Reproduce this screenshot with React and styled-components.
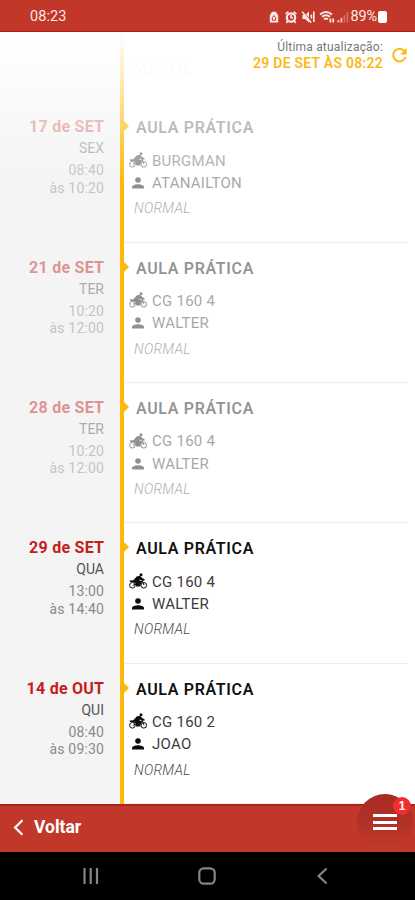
import React from 'react'
import styled, { createGlobalStyle } from 'styled-components'

const lessons = [
    { date: "17 de SET", day: "SEX", start: "08:40", end: "às 10:20", vehicle: "BURGMAN", teacher: "ATANAILTON", past: true },
    { date: "21 de SET", day: "TER", start: "10:20", end: "às 12:00", vehicle: "CG 160 4", teacher: "WALTER", past: true },
    { date: "28 de SET", day: "TER", start: "10:20", end: "às 12:00", vehicle: "CG 160 4", teacher: "WALTER", past: true },
    { date: "29 de SET", day: "QUA", start: "13:00", end: "às 14:40", vehicle: "CG 160 4", teacher: "WALTER", past: false },
    { date: "14 de OUT", day: "QUI", start: "08:40", end: "às 09:30", vehicle: "CG 160 2", teacher: "JOAO", past: false },
]

function MotorbikeIcon() {
    return (
        <svg width="19" height="17" viewBox="0 0 19 17" fill="none" stroke="currentColor">
            <circle cx="3.4" cy="12.3" r="2.8" strokeWidth="1" />
            <circle cx="14.8" cy="12.3" r="2.8" strokeWidth="1" />
            <circle cx="12" cy="1.8" r="1.5" fill="currentColor" stroke="none" />
            <path d="M.6 7.6 4.4 7.2 7.6 3.4 11 2.8 13.2 5 15.6 6.2 15.4 7.8 12.6 7.6 10.8 6.4 10.2 7.2 13.4 8.6 11.8 11 11.2 13.4 7.2 13.4 6.6 10.6 4.6 9.2 1.2 9Z" fill="currentColor" stroke="none" />
            <path d="M12.8 6.6 15 12.2M3.8 12.3 7.8 11" strokeWidth="1" />
        </svg>
    )
}

function PersonIcon() {
    return (
        <svg width="12" height="12" viewBox="0 0 12 12" fill="currentColor">
            <circle cx="6" cy="3" r="2.8" />
            <path d="M0 11.6V10C0 8 4 7.2 6 7.2S12 8 12 10V11.6Z" />
        </svg>
    )
}

function StatusIcons() {
    return (
        <svg width="84" height="16" viewBox="0 0 84 16" fill="none" stroke="#fbe9e7">
            <path d="M1.8 13.5V6.5L3.5 3.5Q6 1.3 8.5 3.5L10.2 6.5V13.5Z" fill="#fbe9e7" stroke="none" />
            <path d="M4.3 8.8 6 6.6 7.7 8.8M4.3 8.6V11.2H7.7V8.6" stroke="#c0382b" strokeWidth="1" />
            <circle cx="23" cy="8.5" r="4.2" strokeWidth="2.2" />
            <path d="M17.6 5 20.4 2.6M28.4 5 25.6 2.6M19.6 12 18.4 14M26.4 12 27.6 14M23 6V8.8H25" strokeWidth="1.6" />
            <path d="M34.5 6H37L41 2.5V13.5L37 10H34.5Z" fill="#fbe9e7" stroke="none" />
            <path d="M35.5 2.5 44.5 13.5" stroke="#c0382b" strokeWidth="1" />
            <path d="M34.2 2.8 43.2 13.8M43.4 5.6V9.6M45.8 2.6V13" strokeWidth="1.6" />
            <path d="M52 5.4Q58 .8 64 5.4M54 7.8Q58 4.8 62 7.8M56 10.2Q58 8.6 60 10.2" strokeWidth="1.9" />
            <path d="M62.4 13.5V9.5M65.2 9.5V13.5" strokeWidth="1.7" />
            <path d="M70.4 13.5V11M73.4 13.5V8.8" strokeWidth="1.8" opacity=".8" />
            <path d="M76.4 13.5V6.2M79.4 13.5V3.2" strokeWidth="1.6" opacity=".35" />
        </svg>
    )
}

function Lesson({ lesson }) {
    return (
        <LessonRow>
            <DateColumn $past={lesson.past}>
                <DateText>{lesson.date}</DateText>
                <DayText>{lesson.day}</DayText>
                <TimeText>{lesson.start}</TimeText>
                <TimeText>{lesson.end}</TimeText>
            </DateColumn>
            <Line>
                <Marker />
            </Line>
            <Details>
                <DetailsContent $past={lesson.past}>
                    <LessonTitle>AULA PRÁTICA</LessonTitle>
                    <InfoRow>
                        <IconBox><MotorbikeIcon /></IconBox>
                        {lesson.vehicle}
                    </InfoRow>
                    <InfoRow>
                        <IconBox><PersonIcon /></IconBox>
                        {lesson.teacher}
                    </InfoRow>
                    <LessonType>NORMAL</LessonType>
                </DetailsContent>
            </Details>
        </LessonRow>
    )
}

function App() {
    return (
        <Screen>
            <GlobalStyle />

            <StatusBar>
                <Clock>08:23</Clock>
                <StatusGroup>
                    <StatusIcons />
                    <BatteryText>89%</BatteryText>
                    <Battery />
                </StatusGroup>
            </StatusBar>

            <Timeline>
                <HiddenRow>
                    <DateColumn />
                    <Line />
                    <Details>
                        <LessonType>NORMAL</LessonType>
                    </Details>
                </HiddenRow>
                {lessons.map((lesson) => <Lesson key={lesson.date} lesson={lesson} />)}
                <Fade />
                <Update>
                    <UpdateText>
                        <UpdateLabel>Última atualização:</UpdateLabel>
                        <UpdateDate>29 DE SET ÀS 08:22</UpdateDate>
                    </UpdateText>
                    <svg width="17" height="17" viewBox="0 0 17 17" fill="none" stroke="#fbb917" strokeWidth="2">
                        <path d="M13.4 4.2A6.3 6.3 0 1 0 14.5 10" />
                        <path d="M15.6 1V7.4H9.2Z" fill="#fbb917" stroke="none" />
                    </svg>
                </Update>
            </Timeline>

            <Footer>
                <BackButton>
                    <svg width="11" height="17" viewBox="0 0 11 17" fill="none" stroke="#fff" strokeWidth="2.2">
                        <path d="M10.4 1.2 3.1 8.5 10.4 15.8" />
                    </svg>
                    Voltar
                </BackButton>
                <MenuButton>
                    <MenuBar />
                    <MenuBar />
                    <MenuBar />
                    <Badge>1</Badge>
                </MenuButton>
            </Footer>

            <NavBar>
                <svg width="18" height="18" viewBox="0 0 18 18" stroke="#858585" strokeWidth="2.2">
                    <path d="M2.5 1V17M8.7 1V17M15 1V17" />
                </svg>
                <svg width="18" height="18" viewBox="0 0 18 18" fill="none" stroke="#858585" strokeWidth="2.2">
                    <rect x="1.3" y="1.3" width="15.4" height="15.4" rx="4.5" />
                </svg>
                <svg width="18" height="18" viewBox="0 0 18 18" fill="none" stroke="#858585" strokeWidth="2.2">
                    <path d="M13.6 1.5 5.6 9 13.6 16.5" />
                </svg>
            </NavBar>
        </Screen>
    )
}

const GlobalStyle = createGlobalStyle`
    * {
        box-sizing: border-box;
    }

    body {
        margin: 0;
        font-family: Roboto, "Liberation Sans", sans-serif;
    }

    svg {
        display: block;
        flex-shrink: 0;
    }
`

const Screen = styled.div`
    width: 100%;
    height: 900px;
    display: flex;
    flex-direction: column;
    overflow: hidden;
    background-color: #fff;
`

const StatusBar = styled.header`
    height: 32px;
    flex-shrink: 0;
    padding: 2px 28px 0 30px;
    display: flex;
    align-items: center;
    justify-content: space-between;
    background-color: #c1372a;
    border-bottom: 1px solid #b51a14;
    color: #fbe9e7;
`

const Clock = styled.span`
    font-size: 14.5px;
    letter-spacing: 0.1px;
`

const StatusGroup = styled.div`
    display: flex;
    align-items: center;
`

const BatteryText = styled.span`
    margin-left: -2px;
    font-size: 14.5px;
    letter-spacing: -0.1px;
`

const Battery = styled.span`
    width: 9px;
    height: 12px;
    margin-left: 1px;
    border-radius: 2px;
    background-color: #fff;
`

const Timeline = styled.main`
    height: 772px;
    flex-shrink: 0;
    position: relative;
    overflow: hidden;
`

const LessonRow = styled.section`
    height: 140.35px;
    flex-shrink: 0;
    display: flex;
`

const HiddenRow = styled(LessonRow)`
    height: 70.3px;
`

const DateColumn = styled.div`
    width: 120px;
    padding: 15px 16px 0 0;
    display: flex;
    flex-direction: column;
    align-items: flex-end;
    background-color: #f4f4f4;

    > * {
        opacity: ${props => props.$past ? 0.45 : 1};
    }
`

const DateText = styled.span`
    font-size: 16px;
    line-height: 20px;
    font-weight: 700;
    letter-spacing: 0.25px;
    margin-right: -0.25px;
    color: #c3201c;
`

const DayText = styled.span`
    margin-top: 2px;
    font-size: 14px;
    line-height: 18px;
    color: #555;
`

const TimeText = styled.span`
    font-size: 14px;
    line-height: 17.5px;
    letter-spacing: 0.15px;
    color: #8a8a8a;

    ${DayText} + & {
        margin-top: 5px;
    }
`

const Line = styled.div`
    width: 4px;
    position: relative;
    background-color: #fdb90b;
`

const Marker = styled.span`
    position: absolute;
    left: 3px;
    top: 18px;
    border-left: 6px solid #fdb90b;
    border-top: 6px solid transparent;
    border-bottom: 6px solid transparent;
`

const DetailsContent = styled.div`
    opacity: ${props => props.$past ? 0.45 : 1};
`

const LessonTitle = styled.h2`
    margin: 0 0 11px 7px;
    font-size: 16px;
    line-height: 21px;
    font-weight: 600;
    letter-spacing: 0.65px;
    color: #111;
`

const InfoRow = styled.div`
    height: 22.5px;
    display: flex;
    align-items: center;
    font-size: 15px;
    letter-spacing: 0.25px;
    color: #3c3c3c;
`

const IconBox = styled.span`
    width: 19px;
    margin-right: 4px;
    display: flex;
    justify-content: center;
    color: #0c0c0c;

    svg[width="12"] {
        margin-right: 2px;
    }
`

const LessonType = styled.div`
    margin: 5px 0 0 5px;
    font-size: 14px;
    line-height: 18px;
    letter-spacing: 0.3px;
    font-style: italic;
    font-weight: 300;
    color: #4c4c4c;
`

const Details = styled.div`
    flex: 1;
    margin-right: 7px;
    padding: 15px 0 0 5px;
    border-bottom: 1px solid #eee;

    ${HiddenRow} & {
        padding-top: 23px;
        border-bottom-color: transparent;
    }

    ${HiddenRow} & ${LessonType} {
        opacity: 0.15;
    }
`

const Fade = styled.div`
    position: absolute;
    inset: 0 0 auto 0;
    height: 150px;
    background: linear-gradient(to bottom, #fff 0, rgba(255, 255, 255, 0.93) 14px, rgba(255, 255, 255, 0.5) 75px, rgba(255, 255, 255, 0) 150px);
`

const Update = styled.div`
    position: absolute;
    top: 8px;
    right: 7px;
    display: flex;
    align-items: center;
    gap: 8px;
`

const UpdateText = styled.div`
    display: flex;
    flex-direction: column;
    align-items: flex-end;
`

const UpdateLabel = styled.span`
    font-size: 12px;
    line-height: 15px;
    letter-spacing: 0.2px;
    color: #777;
`

const UpdateDate = styled.span`
    font-size: 14px;
    line-height: 16px;
    font-weight: 600;
    letter-spacing: 0.25px;
    color: #fbb917;
`

const Footer = styled.footer`
    height: 48px;
    flex-shrink: 0;
    display: flex;
    justify-content: space-between;
    background-color: #c1372a;
    border-top: 2px solid #b3201a;
`

const BackButton = styled.button`
    padding: 0 0 4px 12px;
    display: flex;
    align-items: center;
    gap: 11px;
    border: 0;
    background: none;
    color: #fff;
    font-family: inherit;
    font-size: 17.5px;
    font-weight: 700;
`

const MenuButton = styled.button`
    width: 56px;
    height: 56px;
    margin: -12px 2px 0 0;
    padding: 0;
    position: relative;
    display: flex;
    flex-direction: column;
    align-items: center;
    justify-content: center;
    gap: 3.5px;
    border: 0;
    border-radius: 50%;
    background: linear-gradient(#a82a22 0, #ae3027 45%, #c1372a 92%);
`

const MenuBar = styled.span`
    width: 24px;
    height: 3px;
    background-color: #fff;
`

const Badge = styled.span`
    width: 18px;
    height: 18px;
    position: absolute;
    top: 3px;
    right: 2px;
    display: flex;
    align-items: center;
    justify-content: center;
    border-radius: 50%;
    background-color: #f02e2b;
    color: #fff;
    font-size: 12px;
    font-weight: 700;
`

const NavBar = styled.nav`
    height: 48px;
    flex-shrink: 0;
    padding: 0 84px 0 82px;
    display: flex;
    align-items: center;
    justify-content: space-between;
    background-color: #000;
`

export default App
